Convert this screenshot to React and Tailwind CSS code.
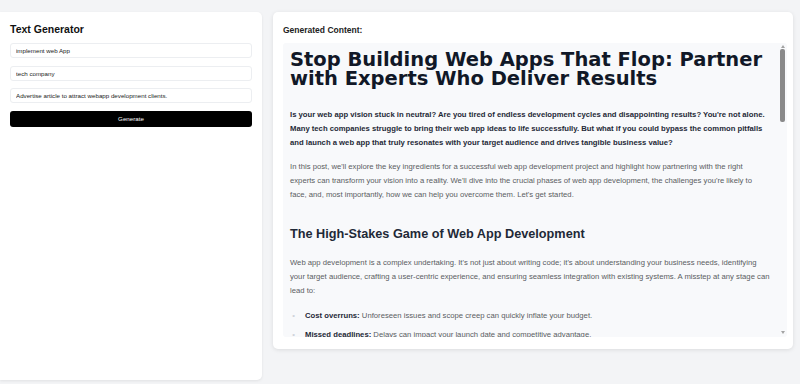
import React, { useState } from "react";

const sections = [
  {
    title: "Building a Web App That Works for You",
    body: "A successful project starts long before the first line of code is written. It begins with a clear plan, a shared understanding of goals and a team that knows how to turn ideas into products people actually want to use.",
    items: [
      ["Discovery:", "We map your business goals, users and constraints."],
      ["Design:", "Wireframes and prototypes validate the experience early."],
      ["Development:", "Agile sprints keep progress visible and predictable."],
    ],
  },
];

const Bullet = ({ label, text }) => (
  <li className="flex gap-[8px] leading-[19px]">
    <span className="text-[#cfd3da] w-[7px] shrink-0 text-center">•</span>
    <span>
      <b className="text-[#1f2937]">{label}</b> {text}
    </span>
  </li>
);

export default function App() {
  const [topic, setTopic] = useState("implement web App");
  const [audience, setAudience] = useState("tech company");
  const [goal, setGoal] = useState("Advertise article to attract webapp development clients.");

  return (
    <div className="min-h-screen bg-[#f3f4f6] font-['Liberation_Sans',Arial,sans-serif] antialiased pt-[12px] flex items-start gap-[11px]">
      {/* Form panel */}
      <div className="w-[262px] h-[368px] bg-white rounded-r-[5px] shadow-[0_1px_3px_rgba(0,0,0,0.08)] px-[10px] pt-[10px]">
        <h2 className="text-[10.5px] leading-[14px] font-bold text-[#111]">Text Generator</h2>
        <div className="mt-[7px] flex flex-col gap-[7.5px]">
          <input
            value={topic}
            onChange={(e) => setTopic(e.target.value)}
            className="h-[15px] w-full border border-[#eceef1] rounded-[3px] px-[5px] text-[6.2px] text-[#222] outline-none"
          />
          <input
            value={audience}
            onChange={(e) => setAudience(e.target.value)}
            className="h-[15px] w-full border border-[#eceef1] rounded-[3px] px-[5px] text-[6.2px] text-[#222] outline-none"
          />
          <input
            value={goal}
            onChange={(e) => setGoal(e.target.value)}
            className="h-[15px] w-full border border-[#eceef1] rounded-[3px] px-[5px] text-[6.2px] text-[#222] outline-none"
          />
          <button className="h-[16px] w-full bg-black text-white rounded-[3px] text-[6.2px]">Generate</button>
        </div>
      </div>

      {/* Output panel */}
      <div className="w-[520px] h-[337px] bg-white rounded-[5px] shadow-[0_1px_4px_rgba(0,0,0,0.1)] pl-[10px] pr-[6px] pt-[12px]">
        <h3 className="text-[8.5px] leading-[12px] font-bold text-[#222]">Generated Content:</h3>
        <div className="relative mt-[7px] h-[294px] bg-[#f8f9fb] rounded-[3px] overflow-hidden">
          <div className="h-full overflow-hidden pl-[7px] pr-[17px] pt-[7px] text-[7.7px] leading-[14px] text-[#5a5d62]">
            <h1 className="font-['DejaVu_Sans',sans-serif] font-bold text-[19.5px] leading-[19px] text-[#111827] -mr-[6px]">
              Stop Building Web Apps That Flop: Partner with Experts Who Deliver Results
            </h1>
            <p className="mt-[20px] font-bold text-[#1f2937]">
              Is your web app vision stuck in neutral? Are you tired of endless development cycles and disappointing results? You're not alone. Many tech companies struggle to bring their web app ideas to life successfully. But what if you could bypass the common pitfalls and launch a web app that truly resonates with your target audience and drives tangible business value?
            </p>
            <p className="mt-[10px]">
              In this post, we'll explore the key ingredients for a successful web app development project and highlight how partnering with the right experts can transform your vision into a reality. We'll dive into the crucial phases of web app development, the challenges you're likely to face, and, most importantly, how we can help you overcome them. Let's get started.
            </p>
            <h2 className="mt-[24px] font-bold text-[12.7px] leading-[16px] text-[#1f2937]">
              The High-Stakes Game of Web App Development
            </h2>
            <p className="mt-[14px]">
              Web app development is a complex undertaking. It's not just about writing code; it's about understanding your business needs, identifying your target audience, crafting a user-centric experience, and ensuring seamless integration with existing systems. A misstep at any stage can lead to:
            </p>
            <ul className="mt-[8px] flex flex-col">
              <Bullet label="Cost overruns:" text="Unforeseen issues and scope creep can quickly inflate your budget." />
              <Bullet label="Missed deadlines:" text="Delays can impact your launch date and competitive advantage." />
              <Bullet label="Poor user adoption:" text="A clunky experience drives users away before they see the value." />
            </ul>
            {sections.map((s) => (
              <div key={s.title}>
                <h2 className="mt-[23px] font-bold text-[12.7px] leading-[16px] text-[#1f2937]">{s.title}</h2>
                <p className="mt-[14px]">{s.body}</p>
                <ul className="mt-[8px] flex flex-col">
                  {s.items.map(([label, text]) => (
                    <Bullet key={label} label={label} text={text} />
                  ))}
                </ul>
              </div>
            ))}
          </div>

          {/* scrollbar */}
          <div className="absolute right-0 top-0 bottom-0 w-[9px] flex flex-col items-center">
            <div className="mt-[2px] w-0 h-0 border-l-[2px] border-r-[2px] border-b-[3px] border-l-transparent border-r-transparent border-b-[#a3a3a3]" />
            <div className="mt-[1px] w-[5px] h-[73px] bg-[#8a8a8a] rounded-[2px]" />
            <div className="mt-auto mb-[3px] w-0 h-0 border-l-[2px] border-r-[2px] border-t-[3px] border-l-transparent border-r-transparent border-t-[#a3a3a3]" />
          </div>
        </div>
      </div>
    </div>
  );
}
